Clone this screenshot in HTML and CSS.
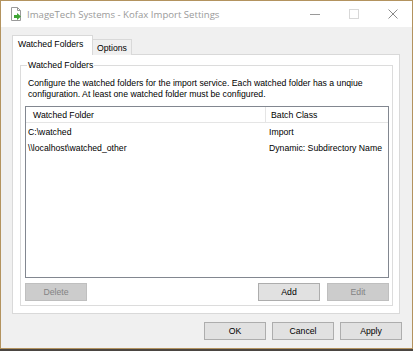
FILE: index.html
```html
<!DOCTYPE html>
<html lang="en">
<head>
    <meta charset="UTF-8">
    <title>ImageTech Systems - Kofax Import Settings</title>
    <link rel="stylesheet" href="styles.css">
</head>
<body>
    <div class="window">
        <div class="titlebar">
            <svg class="app-icon" width="16" height="16" viewBox="0 0 16 16">
                <path d="M3.5 1.5h6l3 3v10h-9z" fill="#fff" stroke="#9a9a9a"/>
                <path d="M9.5 1.5v3h3" fill="none" stroke="#9a9a9a"/>
                <path d="M6 9h3V7l4 3.5-4 3.5v-2H6z" fill="#3fa535"/>
            </svg>
            <span class="title">ImageTech Systems - Kofax Import Settings</span>
            <div class="controls">
                <svg width="10" height="10" viewBox="0 0 10 10"><path d="M0 5.5h10" stroke="#9a9a9a"/></svg>
                <svg width="10" height="10" viewBox="0 0 10 10"><rect x="0.5" y="0.5" width="9" height="9" fill="none" stroke="#d8d8d8"/></svg>
                <svg width="10" height="10" viewBox="0 0 10 10"><path d="M0.5 0.5l9 9M9.5 0.5l-9 9" stroke="#8a8a8a"/></svg>
            </div>
        </div>

        <div class="content">
            <div class="tabs">
                <div class="tab active">Watched Folders</div>
                <div class="tab">Options</div>
            </div>
            <div class="tab-panel">
                <div class="group">
                    <span class="group-title">Watched Folders</span>
                    <p class="desc">Configure the watched folders for the import service. Each watched folder has a unqiue configuration. At least one watched folder must be configured.</p>
                    <div class="listview">
                        <div class="lv-row lv-header">
                            <div class="col-folder">Watched Folder</div>
                            <div class="col-class">Batch Class</div>
                        </div>
                        <div class="lv-row">
                            <div class="col-folder">C:\watched</div>
                            <div class="col-class">Import</div>
                        </div>
                        <div class="lv-row">
                            <div class="col-folder">\\localhost\watched_other</div>
                            <div class="col-class">Dynamic: Subdirectory Name</div>
                        </div>
                    </div>
                    <div class="group-buttons">
                        <button class="btn" disabled>Delete</button>
                        <span class="spacer"></span>
                        <button class="btn">Add</button>
                        <button class="btn" disabled>Edit</button>
                    </div>
                </div>
            </div>
            <div class="dialog-buttons">
                <button class="btn">OK</button>
                <button class="btn">Cancel</button>
                <button class="btn">Apply</button>
            </div>
        </div>
    </div>
</body>
</html>
```

FILE: styles.css
```css
* {
    box-sizing: border-box;
}
body {
    margin: 0;
    background-color: #4a4541;
    font-family: 'Liberation Sans', Arial, sans-serif;
    font-size: 8.7px;
    color: #000;
}
.window {
    width: 413px;
    height: 349px;
    border: 1px solid #b3935f;
    background-color: #f0f0f0;
    display: flex;
    flex-direction: column;
}
.titlebar {
    height: 26px;
    background-color: #fff;
    display: flex;
    align-items: center;
    padding-left: 7px;
}
.app-icon {
    margin-right: 3px;
}
.title {
    font-family: 'Open Sans', sans-serif;
    font-size: 9.6px;
    color: #9a9a9a;
}
.controls {
    margin-left: auto;
    display: flex;
    gap: 29px;
    padding-right: 14px;
}
.content {
    flex: 1;
    padding: 8px 10px 0 11px;
}
.tabs {
    display: flex;
    align-items: flex-end;
    height: 20px;
    position: relative;
    z-index: 1;
    margin-bottom: -1px;
}
.tab {
    height: 16px;
    padding: 0 4px;
    border: 1px solid #d9d9d9;
    border-bottom: none;
    border-left: none;
    background-color: #f0f0f0;
    display: flex;
    align-items: center;
}
.tab.active {
    height: 20px;
    width: 81px;
    border-left: 1px solid #d9d9d9;
    background-color: #fff;
    padding: 0 5px 3px;
}
.tab-panel {
    width: 388px;
    height: 260px;
    border: 1px solid #d9d9d9;
    background-color: #fff;
    padding: 10px 6px 7px 7px;
}
.group {
    height: 100%;
    border: 1px solid #dcdcdc;
    position: relative;
    padding: 12px 3px 3px 4px;
    display: flex;
    flex-direction: column;
}
.group-title {
    position: absolute;
    top: -6px;
    left: 6px;
    padding: 0 1px;
    background-color: #fff;
    line-height: 10px;
}
.desc {
    margin: 0 0 0 3px;
    line-height: 10.5px;
    height: 28px;
}
.listview {
    height: 172px;
    border: 1px solid #828790;
    background-color: #fff;
}
.lv-row {
    display: flex;
    height: 16px;
    align-items: center;
}
.lv-header {
    height: 16px;
    border-bottom: 1px solid #e5e5e5;
    margin-bottom: 1px;
}
.col-folder {
    width: 240px;
    padding-left: 2px;
    white-space: nowrap;
}
.col-class {
    padding-left: 3px;
    white-space: nowrap;
}
.lv-header .col-folder {
    padding-left: 7px;
    height: 100%;
    display: flex;
    align-items: center;
    border-right: 1px solid #e5e5e5;
}
.lv-header .col-class {
    padding-left: 5px;
}
.group-buttons {
    display: flex;
    gap: 7px;
    margin-top: 5px;
}
.spacer {
    flex: 1;
}
.btn {
    width: 62px;
    height: 18px;
    padding: 0;
    border: 1px solid #adadad;
    background-color: #e1e1e1;
    font-family: 'Liberation Sans', Arial, sans-serif;
    font-size: 8.7px;
    color: #000;
}
.btn:disabled {
    background-color: #cccccc;
    border-color: #bfbfbf;
    color: #838383;
}
.dialog-buttons {
    display: flex;
    justify-content: flex-end;
    gap: 6px;
    margin-top: 8px;
}
```
